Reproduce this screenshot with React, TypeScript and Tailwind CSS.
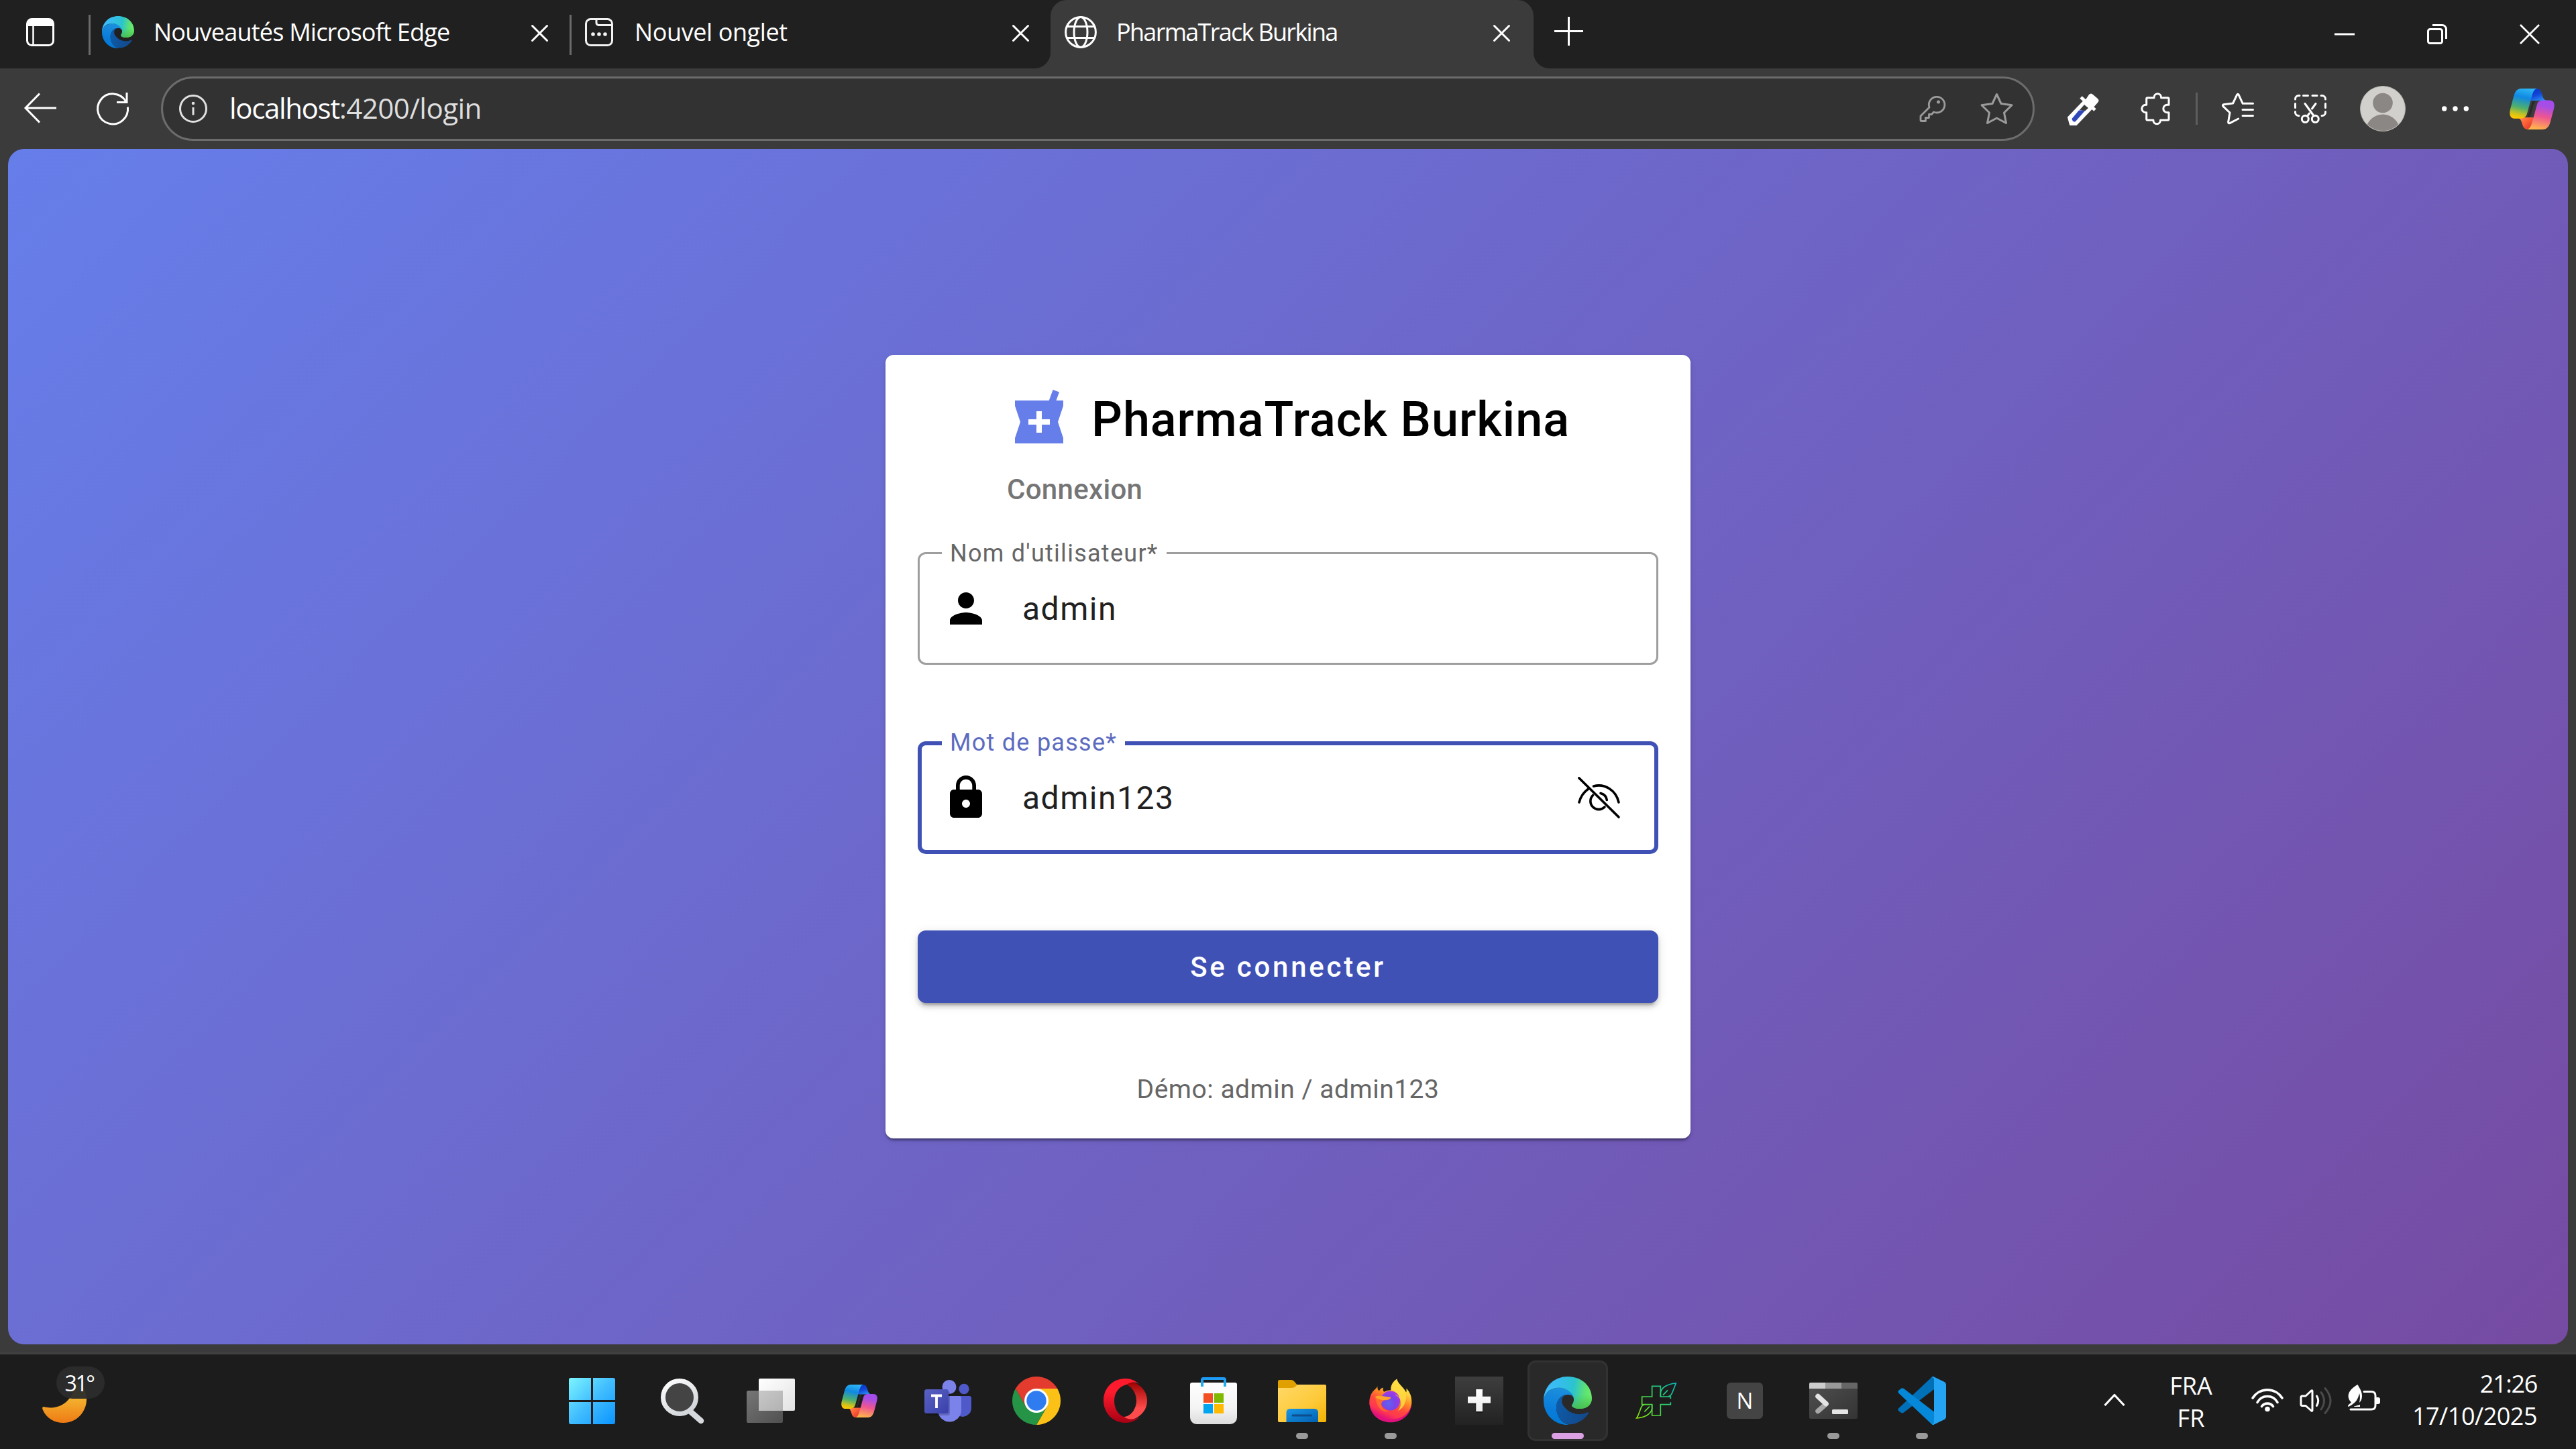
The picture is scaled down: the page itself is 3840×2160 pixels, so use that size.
import React from "react";

type SvgProps = { w: number; h: number; vb?: string; className?: string; children: React.ReactNode };

function Svg({ w, h, vb, className, children }: SvgProps) {
  return (
    <svg width={w} height={h} viewBox={vb ?? `0 0 ${w} ${h}`} fill="none" className={`block shrink-0 overflow-visible ${className ?? ""}`}>
      {children}
    </svg>
  );
}

/* ---------- Shared logos ---------- */

function EdgeLogo({ size, id }: { size: number; id: string }) {
  return (
    <Svg w={size} h={size} vb="0 0 216 216">
      <defs>
        <linearGradient id={`${id}a`} x1="0" y1="0.45" x2="1" y2="0.55">
          <stop offset="0" stopColor="#3fbcff" />
          <stop offset="0.28" stopColor="#36bdee" />
          <stop offset="0.6" stopColor="#2bc3cf" />
          <stop offset="0.85" stopColor="#5ee273" />
          <stop offset="1" stopColor="#6aee6c" />
        </linearGradient>
        <linearGradient id={`${id}b`} x1="0.5" y1="0" x2="0.3" y2="1">
          <stop offset="0" stopColor="#1c8fdc" />
          <stop offset="0.6" stopColor="#0a7ddb" />
          <stop offset="1" stopColor="#0078d4" />
        </linearGradient>
        <linearGradient id={`${id}c`} x1="0" y1="0" x2="1" y2="0.3">
          <stop offset="0" stopColor="#0d5cab" />
          <stop offset="1" stopColor="#124a8c" />
        </linearGradient>
        <linearGradient id={`${id}d`} x1="0" y1="0" x2="0" y2="1">
          <stop offset="0.55" stopColor="#46bd4c" stopOpacity="0" />
          <stop offset="1" stopColor="#46bd4c" stopOpacity="0.9" />
        </linearGradient>
      </defs>
      <path d="M0 108C0 72 36 50 70 50C108 50 135 72 136 98C131 84 120 81 107 81C75 81 57 110 57 138C57 180 85 212 116 216C50 220 0 170 0 108Z" fill={`url(#${id}b)`} />
      <path d="M107 81C75 81 57 110 57 138C57 180 85 215 120 214C155 212 184 190 200 166C203 160 198 158 193 161C165 174 130 170 107 150C93 137 80 125 82 104C83 92 95 81 107 81Z" fill={`url(#${id}c)`} />
      <path d="M0 106C2 40 50 0 108 0C170 0 216 42 216 98C216 126 193 144 162 144C145 144 123 138 127 126C133 119 136 110 135 98C133 75 105 50 70 50C38 50 5 66 0 106Z" fill={`url(#${id}a)`} />
      <path d="M0 106C2 40 50 0 108 0C170 0 216 42 216 98C216 126 193 144 162 144C145 144 123 138 127 126C133 119 136 110 135 98C133 75 105 50 70 50C38 50 5 66 0 106Z" fill={`url(#${id}d)`} />
    </Svg>
  );
}

function CopilotLogo({ w, h, id }: { w: number; h: number; id: string }) {
  return (
    <Svg w={w} h={h} vb="0 0 54 49">
      <defs>
        <linearGradient id={`${id}a`} x1="0.6" y1="0" x2="0.4" y2="1">
          <stop offset="0" stopColor="#2db4f4" />
          <stop offset="0.3" stopColor="#1088e2" />
          <stop offset="0.65" stopColor="#4fb06c" />
          <stop offset="0.85" stopColor="#c3c225" />
          <stop offset="1" stopColor="#ffc800" />
        </linearGradient>
        <linearGradient id={`${id}b`} x1="0.2" y1="0" x2="0.8" y2="1">
          <stop offset="0" stopColor="#0a2fc0" />
          <stop offset="0.5" stopColor="#1147d8" />
          <stop offset="1" stopColor="#2f92f2" />
        </linearGradient>
        <linearGradient id={`${id}c`} x1="0.6" y1="0" x2="0.4" y2="1">
          <stop offset="0" stopColor="#a24cec" />
          <stop offset="0.2" stopColor="#a84ee4" />
          <stop offset="0.55" stopColor="#ee5590" />
          <stop offset="1" stopColor="#ffb54a" />
        </linearGradient>
        <linearGradient id={`${id}d`} x1="0" y1="0" x2="1" y2="0.6">
          <stop offset="0" stopColor="#ff9a5a" />
          <stop offset="0.5" stopColor="#ff6238" />
          <stop offset="1" stopColor="#d92f2a" />
        </linearGradient>
      </defs>
      <path d="M20 0H32C38 0 38 5 40 10C41 13 43 14.500 46 14.500H26C24 14.500 20 6 20 0Z" fill={`url(#${id}b)`} />
      <path d="M34 49H22C16 49 16 44 14 39C13 36 11 34.500 8 34.500H28C30 34.500 34 43 34 49Z" fill={`url(#${id}d)`} />
      <path d="M15 0H33C29 1 28 5 26.500 10L21 30C20 34 17 36 13 36H6C1 36-1 31 1 24L5 9C7 2 10 0 15 0Z" fill={`url(#${id}a)`} />
      <path d="M39 49H21C25 48 26 44 27.500 39L33 19C34 15 37 14 41 14H48C53 14 55 18 53 25L49 40C47 47 44 49 39 49Z" fill={`url(#${id}c)`} />
      <path d="M27.500 15H31.500Q29.500 16.500 28.500 20L25.500 30.500Q24.500 34 22 34.500L21.500 34Q22.500 32.500 23 30.500Z" fill="#2a2a2a" />
    </Svg>
  );
}

/* ---------- Tab strip ---------- */

function CloseX({ size = 25 }: { size?: number }) {
  return (
    <Svg w={size} h={size} vb="0 0 25 25">
      <path d="M1.500 1.500L23.500 23.500M23.500 1.500L1.500 23.500" stroke="#fff" strokeWidth="3" strokeLinecap="round" />
    </Svg>
  );
}

function Tab({ icon, title, active, className }: { icon: React.ReactNode; title: string; active?: boolean; className: string }) {
  return (
    <div className={`flex h-[102px] items-center ${active ? "w-[720px] rounded-t-3xl bg-[#3b3b3b] pr-[35px] pl-[21px]" : "w-[714px] pr-8 pl-[17px]"}`}>
      <div className="-mt-1.5 flex size-12 items-center justify-center">{icon}</div>
      <div className={`-mt-[7px] ml-[29px] flex-1 whitespace-nowrap text-[36px] leading-[48px] ${className}`}>{title}</div>
      <div className="-mt-[3px]">
        <CloseX />
      </div>
    </div>
  );
}

function Flare({ side }: { side: "left" | "right" }) {
  return (
    <div className="relative w-0 self-end">
      <div className={`absolute bottom-0 size-6 bg-[#3b3b3b] ${side === "left" ? "right-0" : "left-0"}`}>
        <div className={`size-6 bg-[#202020] ${side === "left" ? "rounded-br-3xl" : "rounded-bl-3xl"}`} />
      </div>
    </div>
  );
}

function TabStrip() {
  return (
    <div className="flex h-[102px] items-center bg-[#202020] text-white">
      <div className="-mt-1.5 w-[132px] pl-[39px]">
        <Svg w={42} h={42}>
          <rect x="1.500" y="1.500" width="39" height="39" rx="7" stroke="#fff" strokeWidth="3" />
          <path d="M1 12V8a7 7 0 0 1 7-7h26a7 7 0 0 1 7 7v4z" fill="#fff" />
          <path d="M10.500 12V40" stroke="#fff" strokeWidth="2.500" />
        </Svg>
      </div>
      <div className="mt-0.5 h-[60px] w-[3px] bg-[#6b6b6b]" />
      <Tab icon={<EdgeLogo size={48} id="tabEdge" />} title="Nouveautés Microsoft Edge" className="tracking-[-0.77px]" />
      <div className="mt-0.5 h-[60px] w-[3px] bg-[#6b6b6b]" />
      <Tab
        title="Nouvel onglet"
        className="tracking-[-0.4px]"
        icon={
          <Svg w={42} h={42}>
            <rect x="1.500" y="1.500" width="39" height="39" rx="7" stroke="#f2f2f2" strokeWidth="3" />
            <path d="M17 2V7a3.500 3.500 0 0 0 3.500 3.500H40" stroke="#f2f2f2" strokeWidth="3" />
            <circle cx="12" cy="24" r="2.800" fill="#f2f2f2" />
            <circle cx="21" cy="24" r="2.800" fill="#f2f2f2" />
            <circle cx="30" cy="24" r="2.800" fill="#f2f2f2" />
          </Svg>
        }
      />
      <Flare side="left" />
      <Tab
        active
        title="PharmaTrack Burkina"
        className="tracking-[-1.7px]"
        icon={
          <Svg w={48} h={48}>
            <g stroke="#fff" strokeWidth="3">
              <circle cx="24" cy="24" r="22.400" />
              <ellipse cx="24" cy="24" rx="10" ry="22.400" />
              <path d="M4 15.500H44M4 32.500H44" />
            </g>
          </Svg>
        }
      />
      <Flare side="right" />
      <div className="-mt-[9px] ml-[31px]">
        <Svg w={43} h={43}>
          <path d="M21.500 0V43M0 21.500H43" stroke="#fff" strokeWidth="3" />
        </Svg>
      </div>
      <div className="ml-auto flex w-[414px] items-center">
        <div className="flex w-[138px] justify-center">
          <Svg w={30} h={30}>
            <path d="M0 15H30" stroke="#fff" strokeWidth="3" />
          </Svg>
        </div>
        <div className="flex w-[138px] justify-center">
          <Svg w={30} h={30}>
            <rect x="1.500" y="7.500" width="21" height="21" rx="3" stroke="#fff" strokeWidth="3" />
            <path d="M8 1.500H22.500a6 6 0 0 1 6 6V22" stroke="#fff" strokeWidth="3" />
          </Svg>
        </div>
        <div className="flex w-[138px] justify-center">
          <Svg w={30} h={30}>
            <path d="M1 1L29 29M29 1L1 29" stroke="#fff" strokeWidth="2.700" />
          </Svg>
        </div>
      </div>
    </div>
  );
}

/* ---------- Toolbar ---------- */

function ToolSlot({ children }: { children: React.ReactNode }) {
  return <div className="flex w-[108px] items-center justify-center">{children}</div>;
}

function Toolbar() {
  return (
    <div className="flex h-[120px] items-center text-white">
      <div className="-mt-[3px] ml-9">
        <Svg w={48} h={46}>
          <path d="M23 1.500L2 23L23 44.500M2 23H48" stroke="#fff" strokeWidth="3" />
        </Svg>
      </div>
      <div className="ml-[60px]">
        <Svg w={48} h={48}>
          <path d="M46.400 21.500A22.500 22.500 0 1 1 43.500 13" stroke="#fff" strokeWidth="3" />
          <path d="M45 0V14.500H30" stroke="#fff" strokeWidth="3" />
        </Svg>
      </div>
      <div className="ml-12 flex h-24 w-[2793px] items-center rounded-full border-[3px] border-[#6c6c6c] bg-[#323232] pr-[29px] pl-6">
        <Svg w={42} h={42}>
          <circle cx="21" cy="21" r="19.500" stroke="#e0e0e0" strokeWidth="3" />
          <path d="M21 19V30.500" stroke="#e0e0e0" strokeWidth="3" />
          <circle cx="21" cy="13" r="2.300" fill="#e0e0e0" />
        </Svg>
        <div className="-mt-0.5 ml-[33px] flex-1 whitespace-nowrap text-[42px] leading-[56px]">
          <span className="tracking-[-1.35px]">localhost</span>
          <span className="tracking-[-0.5px] text-[#dedede]">:4200/login</span>
        </div>
        <Svg w={38} h={40}>
          <path d="M15 18L2 31V37.500Q2 38.500 3 38.500H9.500V33.500H14.500V28.500H18.500L21.500 25A11.800 11.800 0 1 0 15 18Z" stroke="#9b9b9b" strokeWidth="2.800" strokeLinejoin="round" />
          <circle cx="28.500" cy="10" r="2.500" fill="#9b9b9b" />
        </Svg>
        <Svg w={49} h={48} className="ml-[53px]">
          <path d="M24.500 2.500L31 16.500L47 18.700L35.500 30L38.500 45.500L24.500 38L10.500 45.500L13.500 30L2 18.700L18 16.500Z" stroke="#9b9b9b" strokeWidth="3" strokeLinejoin="round" />
        </Svg>
      </div>
      <div className="ml-[18px] flex items-center">
        <ToolSlot>
          <Svg w={48} h={49}>
            <path d="M2 37L25 13L37 24L14 48H5Z" fill="#fff" stroke="#fff" strokeWidth="2" strokeLinejoin="round" />
            <path d="M19 26L26 18L32 23L27 27.500Z" fill="#3b3b3b" />
            <path d="M18 26.500H27.500L13 43Q9 45 7.500 39Z" fill="#2f47b8" />
            <path d="M21 7L42 26" stroke="#fff" strokeWidth="5" />
            <path d="M27 12L33 3Q36 0 39 3L46 9Q49 12 46 15L38 24Z" fill="#fff" />
          </Svg>
        </ToolSlot>
        <ToolSlot>
          <Svg w={48} h={48}>
            <path d="M12.500 7.700H22V7a5.300 5.300 0 0 1 10.600 0v.7H42.500q1.500 0 1.500 1.500V18.300h-2.500a5.700 5.700 0 0 0 0 11.400H44V39.500q0 1.500-1.500 1.500H31.500v.5a5.300 5.300 0 0 1-10.600 0V41h-8.700q-1.500 0-1.500-1.500V29.700h-1.200a5.700 5.700 0 0 1 0-11.400h1.200V9.200q0-1.500 1.500-1.500z" stroke="#fff" strokeWidth="3" strokeLinejoin="round" />
          </Svg>
        </ToolSlot>
        <div className="flex w-[15px] justify-center">
          <div className="h-12 w-[3px] bg-[#5e5e5e]" />
        </div>
        <ToolSlot>
          <Svg w={48} h={48}>
            <g stroke="#fff" strokeWidth="3" strokeLinecap="round" strokeLinejoin="round">
              <path d="M46.500 16.300H31.200L25.200 3.300Q23.900 1 22.600 3.300L16.600 16L2.800 17.800Q.5 18.400 1.900 20.300L12 30L9.600 44Q9.600 46.400 11.900 45.600L24.700 39" />
              <path d="M31 25.400H46.500M31 34.400H46.500" />
            </g>
          </Svg>
        </ToolSlot>
        <ToolSlot>
          <Svg w={48} h={48}>
            <g stroke="#fff" strokeWidth="3" strokeLinecap="round">
              <path d="M1.500 10V9.500A5 5 0 0 1 6.500 4.500H8M40 4.500H41.500A5 5 0 0 1 46.500 9.500V10M46.500 28.500V29.500A5 5 0 0 1 41.500 34.500H41M7 34.500H6.500A5 5 0 0 1 1.500 29.500V28.500" />
              <path d="M13.500 4.500H20.500M27 4.500H34M1.500 16.500V22.500M46.500 16.500V22.500" />
              <path d="M16 16.500L29 34.500M32 16.500L26.500 24M22.500 31L19.500 35" />
              <circle cx="16.300" cy="39.300" r="5" />
              <circle cx="31.300" cy="39.300" r="5" />
            </g>
          </Svg>
        </ToolSlot>
        <ToolSlot>
          <Svg w={68} h={68}>
            <clipPath id="avatarClip">
              <circle cx="34" cy="34" r="33" />
            </clipPath>
            <circle cx="34" cy="34" r="33.500" fill="#d2d0cc" stroke="#b4b2ae" strokeWidth="1" />
            <circle cx="34" cy="25.500" r="14.800" fill="#8b8784" />
            <circle cx="34" cy="68" r="25.500" fill="#8b8784" clipPath="url(#avatarClip)" />
          </Svg>
        </ToolSlot>
        <ToolSlot>
          <Svg w={42} h={8}>
            <circle cx="4.700" cy="4" r="3.700" fill="#fff" />
            <circle cx="21" cy="4" r="3.700" fill="#fff" />
            <circle cx="37.300" cy="4" r="3.700" fill="#fff" />
          </Svg>
        </ToolSlot>
        <div className="ml-[27px]">
          <CopilotLogo w={67} h={61} id="toolCopilot" />
        </div>
      </div>
    </div>
  );
}

/* ---------- Login card ---------- */

function Field({ label, value, icon, focused, trailing, labelClass }: { label: string; value: string; icon: string; focused?: boolean; trailing?: React.ReactNode; labelClass: string }) {
  return (
    <div className={`relative flex h-[168px] items-center rounded-xl ${focused ? "border-[6px] border-[#3f51b5] px-[30px]" : "border-[3px] border-[#9e9e9e] px-[33px]"}`}>
      <div
        className={`absolute bg-white pr-3 pl-3 text-[36px] leading-[48px] whitespace-nowrap ${focused ? "-top-7 left-[30px] text-[#5c6bc0]" : "-top-[25px] left-[33px] text-[#666]"} ${labelClass}`}
      >
        {label}
      </div>
      <Svg w={72} h={72} vb="0 0 24 24">
        <path d={icon} fill="#000" />
      </Svg>
      <div className="mt-px ml-12 flex-1 text-[48px] leading-[72px] tracking-[1.5px] text-[#212121]">{value}</div>
      {trailing}
    </div>
  );
}

const PERSON = "M12 12c2.210 0 4-1.790 4-4s-1.790-4-4-4-4 1.790-4 4 1.790 4 4 4zm0 2c-2.670 0-8 1.340-8 4v2h16v-2c0-2.660-5.330-4-8-4z";
const LOCK =
  "M18 8h-1V6c0-2.760-2.240-5-5-5S7 3.240 7 6v2H6c-1.100 0-2 .9-2 2v10c0 1.100.9 2 2 2h12c1.100 0 2-.9 2-2V10c0-1.100-.9-2-2-2zm-6 9c-1.100 0-2-.9-2-2s.9-2 2-2 2 .9 2 2-.9 2-2 2zm3.100-9H8.900V6c0-1.710 1.390-3.100 3.100-3.100 1.710 0 3.100 1.390 3.100 3.100v2z";

function LoginCard() {
  return (
    <div className="mt-[307px] h-[1168px] w-[1200px] rounded-xl bg-white px-12 pt-12 font-['Roboto',sans-serif] shadow-[0_6px_3px_-3px_rgba(0,0,0,0.2),0_3px_3px_0_rgba(0,0,0,0.14),0_3px_9px_0_rgba(0,0,0,0.12)]">
      <div className="ml-[133px] flex h-24 items-center">
        <Svg w={96} h={96} vb="0 0 24 24">
          <path
            fillRule="evenodd"
            d="M21 5h-2.640l1.140-3.140L17.150 1l-1.460 4H3v2l2 6-2 6v2h18v-2l-2-6 2-6V5zm-5 9h-3v3h-2v-3H8v-2h3V9h2v3h3v2z"
            fill="#667eea"
          />
        </Svg>
        <div className="mt-0.5 ml-[30px] whitespace-nowrap text-[72px] leading-24 font-medium tracking-[0.95px] text-black">PharmaTrack Burkina</div>
      </div>
      <div className="mt-7 ml-[133px] text-[42px] leading-[58px] font-medium tracking-[0.3px] text-[#757575]">Connexion</div>
      <div className="mt-16">
        <Field label="Nom d'utilisateur*" value="admin" icon={PERSON} labelClass="tracking-[1.27px]" />
      </div>
      <div className="mt-[114px]">
        <Field
          label="Mot de passe*"
          value="admin123"
          icon={LOCK}
          focused
          labelClass="tracking-[1.27px]"
          trailing={
            <Svg w={63} h={62} className="mr-[21px]">
              <g stroke="#000" strokeWidth="3.600" strokeLinecap="round">
                <path d="M1.800 1.800L61 60" />
                <path d="M2 38C4 30 9 22.500 16 17.700" />
                <path d="M23.500 14C40 9.500 57 20 61 38" />
                <path d="M22.500 27.500A12.300 12.300 0 1 0 40 45" />
                <path d="M34 24.500A12.300 12.300 0 0 1 43.300 34.500" />
              </g>
            </Svg>
          }
        />
      </div>
      <div className="mt-[114px] h-[108px] rounded-xl bg-[#3f51b5] text-center text-[42px] leading-[109px] font-medium tracking-[3.75px] text-white shadow-[0_9px_3px_-6px_rgba(0,0,0,0.2),0_6px_6px_0_rgba(0,0,0,0.14),0_3px_15px_0_rgba(0,0,0,0.12)]">
        Se connecter
      </div>
      <div className="mt-[99px] text-center text-[39px] leading-[60px] tracking-[0.5px] text-[#666]">Démo: admin / admin123</div>
    </div>
  );
}

/* ---------- Taskbar ---------- */

function Slot({ children, state }: { children: React.ReactNode; state?: "open" | "active" }) {
  return (
    <div className="flex w-[132px] justify-center">
      <div className={`relative flex h-[120px] w-[120px] items-center justify-center ${state === "active" ? "rounded-xl border-[3px] border-[#323232] bg-[#292929]" : ""}`}>
        {children}
        {state === "open" && <div className="absolute bottom-[3px] h-[9px] w-[18px] rounded-full bg-[#9a9a9a]" />}
        {state === "active" && <div className="absolute bottom-0 h-[9px] w-12 rounded-full bg-[#dba0e4]" />}
      </div>
    </div>
  );
}

function Taskbar() {
  return (
    <div className="flex h-[141px] items-start bg-[#1c1c1c] pt-[9px] text-white">
      <div className="h-[120px] w-[819px]">
        <div className="relative mt-1 ml-[60px] h-[100px] w-[100px]">
          <Svg w={72} h={90}>
            <defs>
              <linearGradient id="moon" x1="0" y1="0" x2="0" y2="1">
                <stop offset="0.2" stopColor="#f5c638" />
                <stop offset="0.6" stopColor="#f2a126" />
                <stop offset="1" stopColor="#ee7a15" />
              </linearGradient>
            </defs>
            <path d="M4.500 65Q2 66 4 70C9 82 21 89 34.500 89C55 89 69 72 69 54C69 41 62 31 53 26C51 52 33 72 4.500 65Z" fill="url(#moon)" />
          </Svg>
          <div className="absolute top-[5px] left-6 h-12 w-[72px] rounded-full bg-[#2c2c2c]/95 pr-1 text-center text-[32px] leading-[49px] tracking-[-2.500px]">31°</div>
        </div>
      </div>

      <Slot>
        <Svg w={69} h={69} className="-ml-1.5">
          <defs>
            <linearGradient id="win" x1="0" y1="0" x2="69" y2="69" gradientUnits="userSpaceOnUse">
              <stop offset="0" stopColor="#7cf5ff" />
              <stop offset="0.5" stopColor="#41bdff" />
              <stop offset="1" stopColor="#0a94ff" />
            </linearGradient>
          </defs>
          <path d="M3 0H33V33H0V3Q0 0 3 0ZM36 0H66Q69 0 69 3V33H36ZM0 36H33V69H3Q0 69 0 66ZM36 36H69V66Q69 69 66 69H36Z" fill="url(#win)" />
        </Svg>
      </Slot>
      <Slot>
        <Svg w={65} h={67}>
          <defs>
            <linearGradient id="lens" x1="0" y1="0" x2="0.6" y2="1">
              <stop offset="0" stopColor="#fff" />
              <stop offset="1" stopColor="#d3d7db" />
            </linearGradient>
          </defs>
          <path d="M44 49L60 63" stroke="#d6dade" strokeWidth="8.500" strokeLinecap="round" />
          <circle cx="28" cy="28" r="24.500" fill="#444" stroke="url(#lens)" strokeWidth="7" />
        </Svg>
      </Slot>
      <Slot>
        <Svg w={72} h={66}>
          <defs>
            <linearGradient id="tvBack" x1="0" y1="0" x2="1" y2="1">
              <stop offset="0" stopColor="#fff" />
              <stop offset="1" stopColor="#e2e2e2" />
            </linearGradient>
            <linearGradient id="tvFront" x1="0" y1="0" x2="1" y2="1">
              <stop offset="0" stopColor="#767676" />
              <stop offset="1" stopColor="#505050" />
            </linearGradient>
            <linearGradient id="tvMix" x1="0" y1="0" x2="1" y2="1">
              <stop offset="0" stopColor="#c8c8c8" />
              <stop offset="1" stopColor="#b2b2b2" />
            </linearGradient>
          </defs>
          <rect x="18" y="0" width="54" height="48" rx="2" fill="url(#tvBack)" />
          <rect x="0" y="18" width="54" height="48" rx="2" fill="url(#tvFront)" />
          <rect x="18" y="18" width="36" height="30" fill="url(#tvMix)" />
        </Svg>
      </Slot>
      <Slot>
        <CopilotLogo w={54} h={49} id="barCopilot" />
      </Slot>
      <Slot>
        <Svg w={70} h={63}>
          <circle cx="37" cy="10.500" r="10.500" fill="#7b83eb" />
          <circle cx="59" cy="13.500" r="7.700" fill="#5059c9" />
          <path d="M41 24H67Q70 24 70 27V42A13 13 0 0 1 49 52Z" fill="#5059c9" />
          <path d="M20 24H52Q55 24 55 27V45A17.500 17.500 0 0 1 20 45Z" fill="#7b83eb" />
          <rect x="2" y="17" width="36" height="36" rx="3.500" fill="#000" opacity="0.2" />
          <defs>
            <linearGradient id="teams" x1="0" y1="0" x2="1" y2="1">
              <stop offset="0" stopColor="#5a62c3" />
              <stop offset="1" stopColor="#3940ab" />
            </linearGradient>
          </defs>
          <rect x="0" y="14" width="36" height="36" rx="3.500" fill="url(#teams)" />
          <path d="M10 23.500H26M18 23.500V42" stroke="#fff" strokeWidth="3.800" />
        </Svg>
      </Slot>
      <Slot>
        <Svg w={72} h={72}>
          <path d="M4.800 18A36 36 0 0 1 67.200 18H36L20.400 45Z" fill="#e33b2e" />
          <path d="M67.200 18A36 36 0 0 1 36 72L51.600 45L36 18Z" fill="#fbc116" />
          <path d="M36 72A36 36 0 0 1 4.800 18L20.400 45L51.600 45Z" fill="#269447" />
          <circle cx="36" cy="36" r="18" fill="#fff" />
          <circle cx="36" cy="36" r="14.700" fill="#2f7cf0" />
        </Svg>
      </Slot>
      <Slot>
        <Svg w={65} h={66}>
          <defs>
            <linearGradient id="opL" x1="0" y1="0" x2="0" y2="1">
              <stop offset="0.3" stopColor="#ff1b2d" />
              <stop offset="1" stopColor="#a70014" />
            </linearGradient>
            <linearGradient id="opR" x1="0" y1="0" x2="0" y2="1">
              <stop offset="0" stopColor="#9c0000" />
              <stop offset="0.7" stopColor="#ff4b4b" />
            </linearGradient>
          </defs>
          <path d="M28 8C36 4 44 5 50 8C60 14 65 23 65 33C65 43 60 52 50 58C44 62 34 62 28 57C40 58 49 46 49 33C49 20 40 8 28 8Z" fill="url(#opR)" />
          <path d="M32.500 0C41 0 47 3 53 8C46 4 40 5 34 9C22 12 16 22 16 33C16 45 22 54 30 57C38 62 46 62 54 57C48 63 41 66 32.500 66C14 66 0 51 0 33C0 14 14 0 32.500 0Z" fill="url(#opL)" />
        </Svg>
      </Slot>
      <Slot>
        <Svg w={70} h={70}>
          <defs>
            <linearGradient id="bag" x1="0" y1="0" x2="0" y2="1">
              <stop offset="0" stopColor="#fff" />
              <stop offset="0.6" stopColor="#f4f4f4" />
              <stop offset="1" stopColor="#dcdcdc" />
            </linearGradient>
            <linearGradient id="handle" x1="0" y1="0" x2="0" y2="1">
              <stop offset="0" stopColor="#1e9bf5" />
              <stop offset="1" stopColor="#22b2e8" />
            </linearGradient>
          </defs>
          <path d="M3 8H67Q70 8 70 11V60A10 10 0 0 1 60 70H10A10 10 0 0 1 0 60V11Q0 8 3 8Z" fill="url(#bag)" />
          <path d="M18 14V4Q18 2 20 2H50Q52 2 52 4V14" stroke="url(#handle)" strokeWidth="4" />
          <path d="M20 24H34V38H20Z" fill="#f25022" />
          <path d="M36 24H50V38H36Z" fill="#7fba00" />
          <path d="M20 40H34V54H20Z" fill="#00a4ef" />
          <path d="M36 40H50V54H36Z" fill="#ffb900" />
        </Svg>
      </Slot>
      <Slot state="open">
        <Svg w={72} h={63}>
          <defs>
            <linearGradient id="folder" x1="0" y1="0" x2="1" y2="1">
              <stop offset="0" stopColor="#ffd968" />
              <stop offset="0.6" stopColor="#fdc938" />
              <stop offset="1" stopColor="#f3b200" />
            </linearGradient>
            <linearGradient id="folderBlue" x1="0" y1="0" x2="1" y2="1">
              <stop offset="0" stopColor="#1a97e6" />
              <stop offset="1" stopColor="#025fb2" />
            </linearGradient>
          </defs>
          <path d="M0 2.500Q0 0 2.500 0H20Q23 0 25 3L30 9L24 14H0Z" fill="#dfa000" />
          <path d="M0 12H20Q24 12 26 10L29 7H70Q72 7 72 9V61Q72 63 70 63H2Q0 63 0 61Z" fill="url(#folder)" />
          <path d="M12.500 63V49Q12.500 43 18 43H54Q60 43 60 49V63Z" fill="url(#folderBlue)" />
          <path d="M22 53H49.500" stroke="#0d4d8c" strokeWidth="2.800" strokeLinecap="round" />
        </Svg>
      </Slot>
      <Slot state="open">
        <Svg w={64} h={66} vb="0 0 192 200">
          <defs>
            <linearGradient id="fox" x1="0.75" y1="0.05" x2="0.3" y2="0.95">
              <stop offset="0" stopColor="#fff44f" />
              <stop offset="0.25" stopColor="#ffcb3a" />
              <stop offset="0.45" stopColor="#ff8a25" />
              <stop offset="0.65" stopColor="#ff4a3d" />
              <stop offset="0.85" stopColor="#ff3750" />
              <stop offset="1" stopColor="#e2127a" />
            </linearGradient>
            <radialGradient id="globe" cx="0.4" cy="0.65" r="0.75">
              <stop offset="0" stopColor="#5f62f0" />
              <stop offset="0.5" stopColor="#7d42e6" />
              <stop offset="1" stopColor="#b436e4" />
            </radialGradient>
          </defs>
          <path d="M0 110C2 160 42 198 96 198C150 198 190 160 191 110L180 120L20 120Z" fill="#e0107c" />
          <path d="M37 34C35 44 38 52 44 55C50 46 56 42 63 41C60 48 62 55 66 60C76 54 88 52 98 52C95 32 106 14 124 2C128 24 152 34 166 62C169 57 167 50 167 44C186 64 192 86 191 108C188 152 150 184 96 184C42 184 3 152 0 108C0 80 12 60 24 50C30 44 34 40 37 34Z" fill="url(#fox)" />
          <circle cx="95" cy="100" r="44" fill="url(#globe)" />
          <path d="M98 52C95 32 106 14 124 2C128 24 152 34 164 66C172 100 156 132 128 148C150 120 148 86 116 74C128 70 130 84 134 82C128 62 112 54 98 52Z" fill="#ffdc41" opacity="0.85" />
          <path d="M26 82C40 76 60 82 97 85C96 94 82 97 72 98C60 100 54 108 54 118C56 134 68 146 92 146C60 156 34 136 26 82Z" fill="#ff6a30" />
          <path d="M26 82C40 74 62 80 97 85C96 94 82 97 70 97C52 98 36 94 26 82Z" fill="#ffa62b" />
        </Svg>
      </Slot>
      <Slot>
        <Svg w={72} h={72}>
          <defs>
            <linearGradient id="tile" x1="0" y1="0" x2="0" y2="1">
              <stop offset="0" stopColor="#3e3e3e" />
              <stop offset="1" stopColor="#222" />
            </linearGradient>
            <linearGradient id="plus" x1="0" y1="0" x2="0" y2="1">
              <stop offset="0" stopColor="#fff" />
              <stop offset="1" stopColor="#ececec" />
            </linearGradient>
          </defs>
          <rect width="72" height="72" fill="url(#tile)" />
          <path d="M31.500 21H41.500V31.500H53.500V41.500H41.500V54.500H31.500V41.500H19.500V31.500H31.500Z" fill="#000" opacity="0.35" />
          <path d="M31.300 19H41V29.700H53V39.700H41V52H31.300V39.700H19V29.700H31.300Z" fill="url(#plus)" />
        </Svg>
      </Slot>
      <Slot state="active">
        <EdgeLogo size={72} id="barEdge" />
      </Slot>
      <Slot>
        <Svg w={60} h={54} vb="0 0 180 162">
          <defs>
            <linearGradient id="leafCross" x1="0" y1="162" x2="180" y2="0" gradientUnits="userSpaceOnUse">
              <stop offset="0" stopColor="#8be000" />
              <stop offset="0.5" stopColor="#35d45e" />
              <stop offset="1" stopColor="#06bcc0" />
            </linearGradient>
          </defs>
          <g stroke="url(#leafCross)" strokeWidth="5">
            <path d="M154 72V63H109V16H71V63H26V98H71V147H109V98H154V88" />
            <path d="M109 63V46C112 22 140 6 178 3C170 22 164 42 156 55Q152 61 144 62M120 56L141 34" />
            <path d="M71 98V118C64 142 40 156 2 159C14 142 16 122 24 108Q28 100 36 99M37 130L60 107" />
          </g>
        </Svg>
      </Slot>
      <Slot>
        <div className="h-[54px] w-[54px] rounded-md bg-[#444] text-center text-[33px] leading-[53px]">N</div>
      </Slot>
      <Slot state="open">
        <Svg w={72} h={54}>
          <defs>
            <linearGradient id="term" x1="0" y1="0" x2="1" y2="1">
              <stop offset="0" stopColor="#505050" />
              <stop offset="1" stopColor="#343434" />
            </linearGradient>
          </defs>
          <rect width="72" height="54" rx="2.500" fill="url(#term)" />
          <path d="M2 0H24V9H0V2Q0 0 2 0Z" fill="#ccc" />
          <path d="M24 0H48V9H24Z" fill="#999" />
          <path d="M48 0H70Q72 0 72 2V9H48Z" fill="#666" />
          <path d="M25 32L13 42.500" stroke="#a8a8a8" strokeWidth="7.500" strokeLinecap="round" />
          <path d="M13 20.500L25 31.500" stroke="#e4e4e4" strokeWidth="7.500" strokeLinecap="round" />
          <rect x="34" y="40" width="24" height="7" rx="1.500" fill="#e4e4e4" />
        </Svg>
      </Slot>
      <Slot state="open">
        <Svg w={72} h={72}>
          <path d="M1 47.500Q-0.500 49 1 51L5 54Q7 55 9 53.500L54 19V0Q52 0 50 1.500Z" fill="#0070b8" />
          <path d="M1 24.500Q-0.500 22.500 1 21L5 17.800Q7 16.500 9 18L54 52.500V72Q52 72 50 70.500Z" fill="#0688d8" />
          <path d="M52 0Q53 0 54.500 .7L69 7.700Q72 9.200 72 12.500V59.500Q72 62.800 69 64.300L54.500 71.300Q52 72.500 50 70.500Q54 72 54 67V5Q54 0 50 1.500Q51 .2 52 0Z" fill="#25a4f4" />
        </Svg>
      </Slot>

      <div className="flex h-[120px] flex-1 items-center">
        <div className="-mt-0.5 ml-[205px]">
          <Svg w={32} h={20}>
            <path d="M1.500 18L16 2.500L30.500 18" stroke="#fff" strokeWidth="3.200" strokeLinejoin="round" />
          </Svg>
        </div>
        <div className="mt-1 ml-[53px] w-[90px] text-center text-[36px] leading-[48px]">
          <div>FRA</div>
          <div>FR</div>
        </div>
        <div className="-mt-0.5 ml-[45px]">
          <Svg w={48} h={36}>
            <g stroke="#fff" strokeWidth="3.600" strokeLinecap="round">
              <path d="M2 15A26 26 0 0 1 46 15" />
              <path d="M9 21.500A17 17 0 0 1 39 21.500" />
              <path d="M15.500 27.500A10.500 10.500 0 0 1 32.500 27.500" />
            </g>
            <circle cx="24" cy="31.500" r="3.800" fill="#fff" />
          </Svg>
        </div>
        <Svg w={48} h={42} className="ml-6">
          <path d="M4 14H9L17.500 6Q19 5 19 7V35Q19 37 17.500 36L9 28.500H4Q2 28.500 2 26.500V16Q2 14 4 14Z" stroke="#fff" strokeWidth="3" strokeLinejoin="round" />
          <path d="M25.500 14Q30 21 25.500 28.500" stroke="#fff" strokeWidth="3" strokeLinecap="round" />
          <path d="M32 8.500Q41 21 32 34" stroke="#4a4a4a" strokeWidth="3" strokeLinecap="round" />
          <path d="M38 2.500Q54 21 38 39.500" stroke="#4a4a4a" strokeWidth="3" strokeLinecap="round" />
        </Svg>
        <div className="-mt-2 ml-6">
          <Svg w={48} h={40}>
            <path d="M24 10.500H35Q41 10.500 41 16.500V31Q41 37 35 37H4" stroke="#fff" strokeWidth="3" strokeLinecap="round" />
            <path d="M42 19H45Q48 19 48 22V26Q48 29 45 29H42Z" fill="#fff" />
            <path d="M14.500 0C17 5 21 9 21 17C21 22 19 25 17 27C18 22 18.500 17 17 13C15.500 20 13 27 1 33Q-1 32 1 30L5 26.500C-4 17 2 7 14.500 0Z" fill="#fff" />
            <path d="M9 32.500L18 30V33H9Z" fill="#fff" />
          </Svg>
        </div>
        <div className="-mt-0.5 flex-1 pr-[58px] text-right text-[36px] leading-[48px]">
          <div className="tracking-[-1.3px]">21:26</div>
          <div className="tracking-[-0.5px]">17/10/2025</div>
        </div>
      </div>
    </div>
  );
}

export default function App() {
  return (
    <div className="flex h-[2160px] w-[3840px] flex-col overflow-hidden bg-[#3b3b3b] font-['Open_Sans',sans-serif]">
      <TabStrip />
      <Toolbar />
      <div className="mx-3 flex h-[1782px] justify-center rounded-3xl bg-[linear-gradient(135deg,#667eea_0%,#764ba2_100%)]">
        <LoginCard />
      </div>
      <div className="mt-3 h-[3px] bg-[#414141]" />
      <Taskbar />
    </div>
  );
}
